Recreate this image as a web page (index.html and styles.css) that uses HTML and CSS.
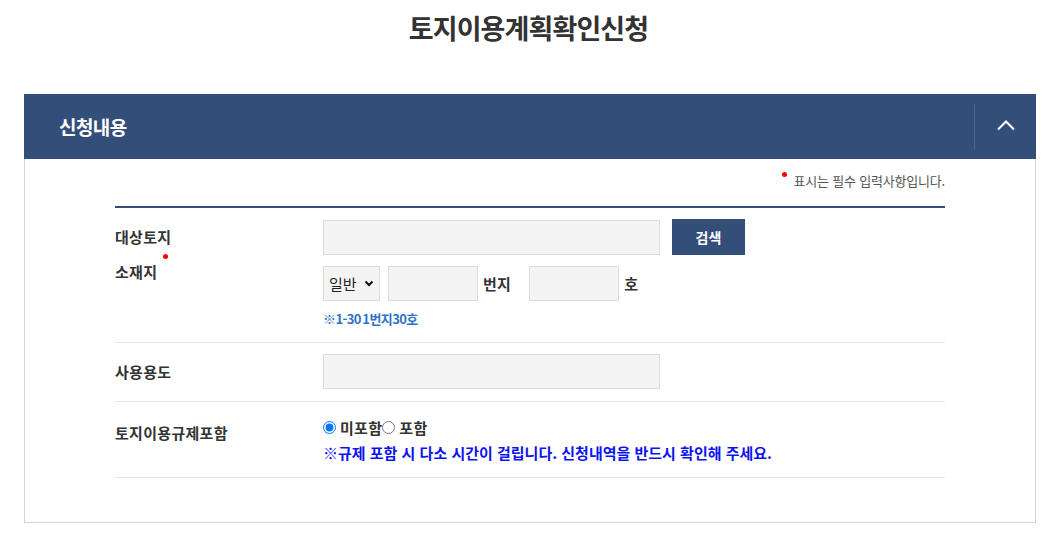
FILE: index.html
```html
<!DOCTYPE html>
<html lang="ko">
<head>
<meta charset="utf-8">
<title>토지이용계획확인신청</title>
<link rel="stylesheet" href="styles.css">
</head>
<body>
<h1 class="page-title">토지이용계획확인신청</h1>
<section class="panel">
  <div class="panel-head">
    <h2 class="panel-title">신청내용</h2>
    <button class="toggle" type="button" aria-label="접기">
      <svg width="20" height="12" viewBox="0 0 20 12"><path d="M2 10.5 L10 2.5 L18 10.5" fill="none" stroke="#fff" stroke-width="2"/></svg>
    </button>
  </div>
  <div class="panel-body">
    <p class="req-note"><span class="req-dot"></span>표시는 필수 입력사항입니다.</p>
    <div class="form">
      <div class="row">
        <div class="label label-top">대상토지<br><span class="req">소재지</span></div>
        <div class="value">
          <div class="line">
            <input class="field field-wide" type="text">
            <button class="btn-search" type="button">검색</button>
          </div>
          <div class="line line-2">
            <div class="select-wrap">
              <select class="select"><option>일반</option><option>산</option></select>
              <svg class="select-arrow" width="10" height="7" viewBox="0 0 10 7"><path d="M1.5 1.5 L5 5 L8.5 1.5" fill="none" stroke="#111" stroke-width="2"/></svg>
            </div>
            <input class="field field-sm" type="text">
            <span class="unit unit-bunji">번지</span>
            <input class="field field-sm" type="text">
            <span class="unit">호</span>
          </div>
          <p class="hint">※1-30 1번지30호</p>
        </div>
      </div>
      <div class="row row-center">
        <div class="label">사용용도</div>
        <div class="value">
          <input class="field field-wide" type="text">
        </div>
      </div>
      <div class="row row-last">
        <div class="label label-reg">토지이용규제포함</div>
        <div class="value value-reg">
          <div class="radios">
            <label class="radio"><input type="radio" name="reg" checked>미포함</label>
            <label class="radio"><input type="radio" name="reg">포함</label>
          </div>
          <p class="warn">※규제 포함 시 다소 시간이 걸립니다. 신청내역을 반드시 확인해 주세요.</p>
        </div>
      </div>
    </div>
  </div>
</section>
</body>
</html>
```
FILE: styles.css
```css
* { box-sizing: border-box; }
body {
  margin: 0;
  background: #fff;
  font-family: "Noto Sans CJK KR", "Noto Sans", sans-serif;
  color: #333;
}
.page-title {
  margin: 10px 0 0;
  height: 84px;
  line-height: 36px;
  text-align: center;
  font-size: 27px;
  font-weight: 700;
  letter-spacing: -0.9px;
  color: #333;
}
.panel {
  margin-left: 24px;
  width: 1012px;
}
.panel-head {
  height: 65px;
  background: #344e7a;
  display: flex;
  align-items: center;
  justify-content: space-between;
  padding-left: 35px;
}
.panel-title {
  margin: 0;
  font-size: 19px;
  font-weight: 700;
  letter-spacing: -0.6px;
  color: #fff;
}
.toggle {
  width: 62px;
  height: 45px;
  border: 0;
  border-left: 1px solid #4b6591;
  background: transparent;
  padding: 0;
  display: flex;
  align-items: center;
  justify-content: center;
  cursor: pointer;
}
.toggle svg { margin-left: 0; margin-top: -3px; }
.panel-body {
  border: 1px solid #d4d4d4;
  border-top: 0;
  padding: 0 90px 44px;
}
.req-note {
  margin: 0;
  padding-top: 13px;
  height: 47px;
  line-height: 18px;
  text-align: right;
  font-size: 13px;
  letter-spacing: -0.2px;
  color: #555;
}
.req-dot {
  display: inline-block;
  width: 5px;
  height: 5px;
  border-radius: 50%;
  background: #f00;
  vertical-align: 9px;
  margin-right: 7px;
}
.form {
  border-top: 2px solid #344e7a;
}
.row {
  display: grid;
  grid-template-columns: 208px 1fr;
  border-bottom: 1px solid #e6e6e6;
  padding: 11px 0 14px;
}
.row-center { align-items: center; padding: 11px 0 12px; }
.row-last { padding: 0; }
.label {
  font-size: 15px;
  font-weight: 700;
  letter-spacing: 0.3px;
  color: #333;
}
.label-top { line-height: 35px; }
.req { position: relative; }
.req::after {
  content: "";
  position: absolute;
  right: -11px;
  top: -7px;
  width: 5px;
  height: 5px;
  border-radius: 50%;
  background: #f00;
}
.line { display: flex; align-items: center; }
.line-2 { margin-top: 11px; }
.field {
  height: 35px;
  background: #f4f4f4;
  border: 1px solid #dcdcdc;
  border-radius: 0;
  padding: 0 8px;
  font: inherit;
  font-size: 14px;
  outline: none;
}
.field-wide { width: 337px; }
.field-sm { width: 90px; }
.btn-search {
  margin-left: 12px;
  width: 73px;
  height: 36px;
  border: 0;
  background: #344e7a;
  color: #fff;
  font: inherit;
  font-size: 14px;
  font-weight: 700;
  letter-spacing: 0;
  cursor: pointer;
}
.select-wrap {
  position: relative;
  width: 57px;
  height: 35px;
  margin-right: 8px;
}
.select {
  appearance: none;
  -webkit-appearance: none;
  width: 100%;
  height: 100%;
  background: #f4f4f4;
  border: 1px solid #dcdcdc;
  border-radius: 0;
  padding: 0 0 0 5px;
  font: inherit;
  font-size: 15px;
  letter-spacing: 0;
  color: #222;
}
.select-arrow {
  position: absolute;
  right: 6px;
  top: 14px;
  pointer-events: none;
}
.unit {
  margin-left: 5px;
  font-size: 15px;
  font-weight: 700;
  letter-spacing: 0.3px;
  color: #333;
}
.unit-bunji { margin-right: 18px; }
.hint {
  margin: 9px 0 0;
  line-height: 18px;
  font-size: 13px;
  font-weight: 700;
  letter-spacing: -0.6px;
  word-spacing: -1.5px;
  color: #2f73c3;
}
.label-reg {
  padding-top: 21px;
  line-height: 20px;
}
.value-reg { padding: 15px 0 13px; }
.radios { display: flex; align-items: center; height: 20px; }
.radio {
  display: inline-flex;
  align-items: center;
  font-size: 15px;
  font-weight: 700;
  letter-spacing: 0.3px;
  color: #333;
}
.radio input {
  width: 13px;
  height: 13px;
  margin: 0 4px 0 0;
}
.warn {
  margin: 5px 0 0;
  line-height: 22px;
  font-size: 15px;
  font-weight: 700;
  letter-spacing: 0;
  color: #0b14f0;
}
```
